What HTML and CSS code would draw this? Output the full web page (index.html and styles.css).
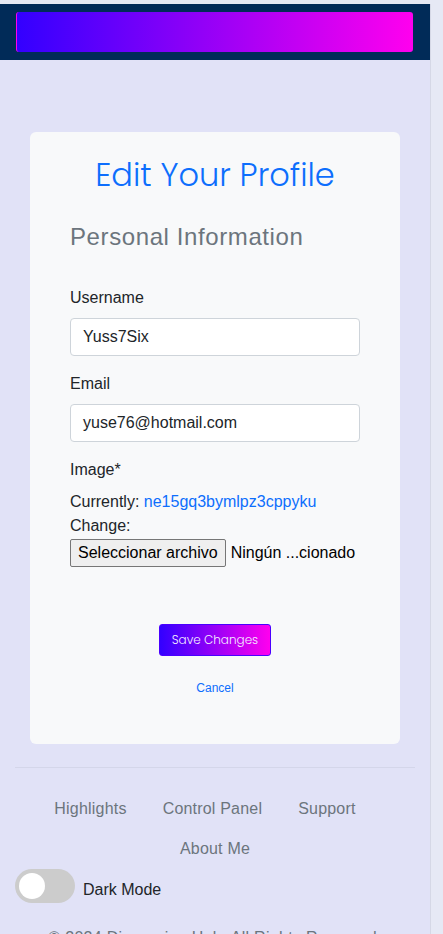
FILE: index.html
```html
<!DOCTYPE html>
<html lang="es">
<head>
<meta charset="utf-8">
<title>Edit Your Profile</title>
<link rel="stylesheet" href="styles.css">
</head>
<body>
<div class="page">
  <nav class="navbar">
    <div class="brand-bar"></div>
  </nav>
  <main class="main">
    <section class="card">
      <h1 class="title">Edit Your Profile</h1>
      <form class="form">
        <h2 class="subtitle">Personal Information</h2>
        <div class="field">
          <label class="label">Username</label>
          <div class="input">Yuss7Six</div>
        </div>
        <div class="field">
          <label class="label">Email</label>
          <div class="input">yuse76@hotmail.com</div>
        </div>
        <div class="field">
          <label class="label">Image*</label>
          <div class="image-info">
            <div>Currently: <a class="link" href="#">ne15gq3bymlpz3cppyku</a></div>
            <div>Change:</div>
            <div class="file-row"><span class="file-btn">Seleccionar archivo</span><span class="file-name">Ningún ...cionado</span></div>
          </div>
        </div>
        <div class="actions">
          <button type="button" class="save-btn">Save Changes</button>
          <a class="cancel" href="#">Cancel</a>
        </div>
      </form>
    </section>
  </main>
  <footer class="footer">
    <ul class="footer-nav">
      <li><a href="#">Highlights</a></li>
      <li><a href="#">Control Panel</a></li>
      <li class="last-in-row"><a href="#">Support</a></li>
      <li><a href="#">About Me</a></li>
    </ul>
    <div class="dark-toggle">
      <span class="switch"><span class="knob"></span></span>
      <span class="dark-label">Dark Mode</span>
    </div>
    <p class="copyright">© 2024 Discussion Hub. All Rights Reserved.</p>
  </footer>
</div>
</body>
</html>
```
FILE: styles.css
```css
html, body {
  margin: 0;
  padding: 0;
}
body {
  background: #e6e9f5;
  font-family: "Liberation Sans", Arial, sans-serif;
  font-size: 16px;
  line-height: 1.5;
  color: #212529;
  overflow: hidden;
}
.page {
  width: 431px;
  margin-top: 4px;
  background: #e1e2f7;
  border-right: 1px solid #d5d8e6;
  box-sizing: border-box;
  min-height: 1000px;
}
.navbar {
  background: #012b58;
  padding: 8px 17px 8px 16px;
  height: 56px;
  box-sizing: border-box;
}
.brand-bar {
  height: 40px;
  border-radius: 3px;
  border-left: 1px solid #ff00ee;
  background: linear-gradient(90deg, #3300ff, #ff00ee);
}
.main {
  padding: 72px 30px 0 30px;
}
.card {
  background: #f8f9fa;
  border-radius: 6px;
  padding: 24px 40px 47px;
}
.title {
  margin: 0;
  text-align: center;
  font-family: "Poppins", "Inter", "Lato", sans-serif;
  font-weight: 300;
  font-size: 32px;
  line-height: 38px;
  color: #0d6efd;
}
.form {
  display: flex;
  flex-direction: column;
}
.subtitle {
  margin: 28px 0 35px;
  font-weight: 400;
  font-size: 24px;
  line-height: 29px;
  letter-spacing: 0.6px;
  color: #6c757d;
}
.field {
  display: flex;
  flex-direction: column;
  gap: 8px;
  margin-bottom: 16px;
}
.label {
  display: block;
}
.input {
  height: 38px;
  box-sizing: border-box;
  border: 1px solid #ced4da;
  border-radius: 4px;
  background: #fff;
  padding: 6px 12px;
  line-height: 24px;
  color: #212529;
}
.image-info {
  display: flex;
  flex-direction: column;
}
.link {
  color: #0d6efd;
  text-decoration: none;
}
.file-row {
  display: flex;
  align-items: center;
  gap: 5px;
  margin-top: 1px;
}
.file-btn {
  display: inline-block;
  height: 28px;
  box-sizing: border-box;
  padding: 1px 7px;
  line-height: 24px;
  background: #efefef;
  border: 1px solid #767676;
  border-radius: 2px;
  color: #000;
}
.file-name {
  color: #000;
}
.actions {
  display: flex;
  flex-direction: column;
  align-items: center;
  margin-top: 41px;
}
.save-btn {
  width: 112px;
  height: 32px;
  border: 1px solid #4a00ff;
  border-radius: 3px;
  background: linear-gradient(90deg, #3300ff, #ff00ee);
  color: #f3ecff;
  font-family: "Poppins", "Inter", "Lato", sans-serif;
  font-weight: 300;
  font-size: 12px;
  padding: 0;
}
.cancel {
  margin-top: 23px;
  font-size: 12px;
  line-height: 18px;
  color: #0d6efd;
  text-decoration: none;
}
.footer {
  margin: 23px 15px 0;
  border-top: 1px solid #d4d6ea;
  padding-top: 21px;
}
.footer-nav {
  list-style: none;
  margin: 0;
  padding: 0;
  display: flex;
  flex-wrap: wrap;
  justify-content: center;
  column-gap: 4px;
}
.footer-nav a {
  display: block;
  padding: 8px 16px;
  color: #6c757d;
  text-decoration: none;
  letter-spacing: 0.2px;
}
.footer-nav .last-in-row {
  margin-right: 20px;
}
.dark-toggle {
  display: flex;
  align-items: center;
  gap: 8px;
}
.switch {
  width: 60px;
  height: 34px;
  border-radius: 17px;
  background: #cccccc;
  display: flex;
  align-items: center;
  padding-left: 4px;
  box-sizing: border-box;
}
.knob {
  width: 26px;
  height: 26px;
  border-radius: 50%;
  background: #fff;
}
.dark-label {
  color: #212529;
  margin-top: 8px;
}
.copyright {
  margin: 23px 0 0;
  text-align: center;
  color: #6c757d;
  letter-spacing: 0.3px;
}
```
